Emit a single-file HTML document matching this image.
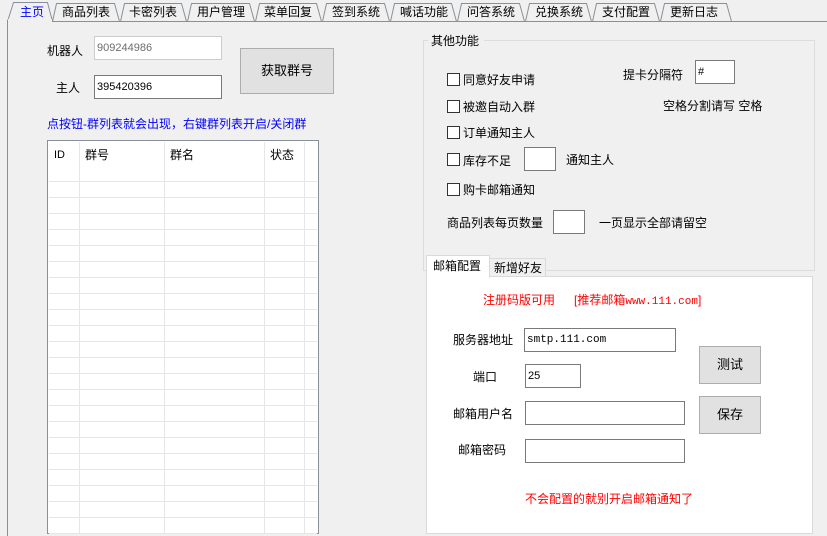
<!DOCTYPE html>
<html><head><meta charset="utf-8"><style>
*{margin:0;padding:0;box-sizing:border-box}
body{width:827px;height:536px;background:#f0f0f0;position:relative;overflow:hidden;font-family:"Liberation Sans","Noto Sans CJK SC",sans-serif;font-size:12px;color:#000}
.a{position:absolute;white-space:nowrap;line-height:14px}
.in{position:absolute;background:#fff;border:1px solid #7a7a7a;font-size:11px;padding-left:2px;line-height:22px}
.btn{position:absolute;background:#e1e1e1;border:1px solid #adadad;text-align:center;font-size:13px}
.cb{position:absolute;width:13px;height:13px;border:1px solid #333;background:#fff}
.red{color:#f00}
</style></head><body>
<svg class="a" style="left:0;top:0" width="827" height="536">
<g fill="#f0f0f0" stroke="#8a9099" stroke-width="1">
<polygon points="52.5,21.5 56.5,3.5 114.5,3.5 119.5,21.5"/>
<polygon points="120.5,21.5 124.5,3.5 181.5,3.5 186.5,21.5"/>
<polygon points="187.5,21.5 191.5,3.5 249.5,3.5 254.5,21.5"/>
<polygon points="255.5,21.5 259.5,3.5 316.5,3.5 321.5,21.5"/>
<polygon points="322.5,21.5 326.5,3.5 384.5,3.5 389.5,21.5"/>
<polygon points="390.5,21.5 394.5,3.5 451.5,3.5 456.5,21.5"/>
<polygon points="457.5,21.5 461.5,3.5 519.5,3.5 524.5,21.5"/>
<polygon points="525.5,21.5 529.5,3.5 586.5,3.5 591.5,21.5"/>
<polygon points="592.5,21.5 596.5,3.5 654.5,3.5 659.5,21.5"/>
<polygon points="660.5,21.5 664.5,3.5 726.5,3.5 731.5,21.5"/>
</g>
<line x1="50" y1="21.5" x2="827" y2="21.5" stroke="#8a9099"/>
<polygon points="7.5,21.5 13.5,2.5 47.5,2.5 52.5,21.5" fill="#f0f0f0" stroke="#8a9099"/>
<rect x="8" y="19" width="44" height="5" fill="#f0f0f0"/>
<line x1="7.5" y1="20" x2="7.5" y2="536" stroke="#8a9099"/>
<rect x="423.5" y="40.5" width="391" height="230" fill="none" stroke="#dcdcdc"/>
<rect x="428" y="34" width="56" height="12" fill="#f0f0f0"/>
<rect x="426.5" y="276.5" width="386" height="257" fill="#fff" stroke="#dadada"/>
<rect x="489.5" y="258.5" width="56" height="18" fill="#f0f0f0" stroke="#dadada"/>
<rect x="426.5" y="255.5" width="63" height="22" fill="#fff" stroke="#dadada"/>
<rect x="427" y="275" width="62" height="3" fill="#fff"/>
<rect x="47.5" y="140.5" width="271" height="393" fill="#fff" stroke="#8a9099"/>
<g stroke="#e6e6e6">
<line x1="79.5" y1="142" x2="79.5" y2="533"/><line x1="164.5" y1="142" x2="164.5" y2="533"/>
<line x1="264.5" y1="142" x2="264.5" y2="533"/><line x1="304.5" y1="142" x2="304.5" y2="533"/>
<g id="r">
<line x1="49" y1="181.5" x2="317" y2="181.5"/><line x1="49" y1="197.5" x2="317" y2="197.5"/><line x1="49" y1="213.5" x2="317" y2="213.5"/><line x1="49" y1="229.5" x2="317" y2="229.5"/><line x1="49" y1="245.5" x2="317" y2="245.5"/><line x1="49" y1="261.5" x2="317" y2="261.5"/><line x1="49" y1="277.5" x2="317" y2="277.5"/><line x1="49" y1="293.5" x2="317" y2="293.5"/><line x1="49" y1="309.5" x2="317" y2="309.5"/><line x1="49" y1="325.5" x2="317" y2="325.5"/><line x1="49" y1="341.5" x2="317" y2="341.5"/><line x1="49" y1="357.5" x2="317" y2="357.5"/>
</g>
<use href="#r" y="192"/>
</g>
</svg>
<div class="a" style="left:20px;top:5px;color:#0000ff">主页</div>
<div class="a" style="left:62px;top:5px">商品列表</div>
<div class="a" style="left:129px;top:5px">卡密列表</div>
<div class="a" style="left:197px;top:5px">用户管理</div>
<div class="a" style="left:264px;top:5px">菜单回复</div>
<div class="a" style="left:332px;top:5px">签到系统</div>
<div class="a" style="left:400px;top:5px">喊话功能</div>
<div class="a" style="left:467px;top:5px">问答系统</div>
<div class="a" style="left:535px;top:5px">兑换系统</div>
<div class="a" style="left:602px;top:5px">支付配置</div>
<div class="a" style="left:670px;top:5px">更新日志</div>

<div class="a" style="left:47px;top:44px">机器人</div>
<div class="in" style="left:94px;top:36px;width:128px;height:24px;border-color:#ccc;color:#6d6d6d">909244986</div>
<div class="a" style="left:56px;top:81px">主人</div>
<div class="in" style="left:94px;top:75px;width:128px;height:24px">395420396</div>
<div class="btn" style="left:240px;top:48px;width:94px;height:46px;line-height:44px">获取群号</div>
<div class="a" style="left:47px;top:117px;color:#0000ff">点按钮-群列表就会出现，右键群列表开启/关闭群</div>
<div class="a" style="left:54px;top:148px;font-size:11px">ID</div>
<div class="a" style="left:85px;top:148px">群号</div>
<div class="a" style="left:170px;top:148px">群名</div>
<div class="a" style="left:270px;top:148px">状态</div>

<div class="a" style="left:431px;top:34px">其他功能</div>
<div class="cb" style="left:447px;top:73px"></div><div class="a" style="left:463px;top:73px">同意好友申请</div>
<div class="cb" style="left:447px;top:100px"></div><div class="a" style="left:463px;top:100px">被邀自动入群</div>
<div class="cb" style="left:447px;top:126px"></div><div class="a" style="left:463px;top:126px">订单通知主人</div>
<div class="cb" style="left:447px;top:153px"></div><div class="a" style="left:463px;top:154px">库存不足</div>
<div class="in" style="left:524px;top:147px;width:32px;height:24px"></div>
<div class="a" style="left:566px;top:153px">通知主人</div>
<div class="cb" style="left:447px;top:183px"></div><div class="a" style="left:463px;top:183px">购卡邮箱通知</div>
<div class="a" style="left:447px;top:216px">商品列表每页数量</div>
<div class="in" style="left:553px;top:210px;width:32px;height:24px"></div>
<div class="a" style="left:599px;top:216px">一页显示全部请留空</div>
<div class="a" style="left:623px;top:68px">提卡分隔符</div>
<div class="in" style="left:695px;top:60px;width:40px;height:24px">#</div>
<div class="a" style="left:663px;top:99px">空格分割请写 空格</div>

<div class="a" style="left:433px;top:259px">邮箱配置</div>
<div class="a" style="left:494px;top:261px">新增好友</div>
<div class="a red" style="left:483px;top:293px">注册码版可用</div>
<div class="a red" style="left:574px;top:293px">[推荐邮箱<span style="font-family:'Liberation Mono',monospace;font-size:11px">www.111.com</span>]</div>
<div class="a" style="left:453px;top:333px">服务器地址</div>
<div class="in" style="left:524px;top:328px;width:152px;height:24px;font-family:'Liberation Mono',monospace">smtp.111.com</div>
<div class="a" style="left:473px;top:370px">端口</div>
<div class="in" style="left:525px;top:364px;width:56px;height:24px">25</div>
<div class="a" style="left:453px;top:407px">邮箱用户名</div>
<div class="in" style="left:525px;top:401px;width:160px;height:24px"></div>
<div class="a" style="left:458px;top:443px">邮箱密码</div>
<div class="in" style="left:525px;top:439px;width:160px;height:24px"></div>
<div class="btn" style="left:699px;top:346px;width:62px;height:38px;line-height:36px">测试</div>
<div class="btn" style="left:699px;top:396px;width:62px;height:38px;line-height:36px">保存</div>
<div class="a red" style="left:525px;top:492px">不会配置的就别开启邮箱通知了</div>
</body></html>
